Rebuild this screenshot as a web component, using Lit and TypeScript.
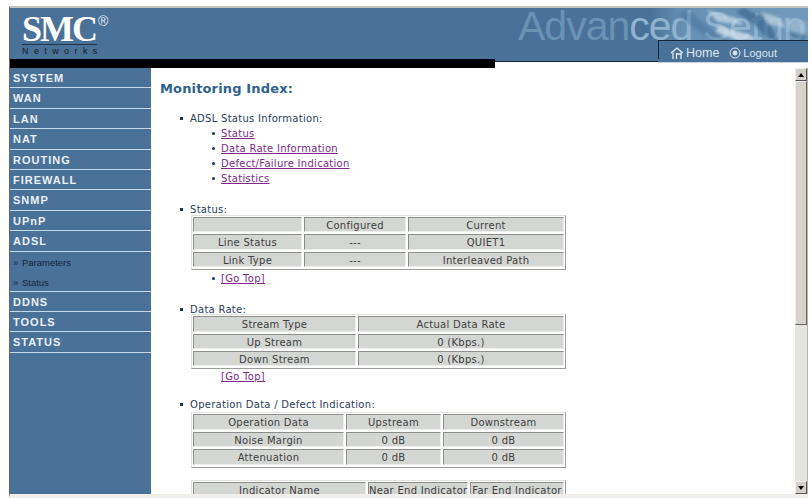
import { LitElement, html, css, svg } from "lit";
import { customElement } from "lit/decorators.js";

const tables = {
  status: { cols: "109px 102px 1fr", rows: [["", "Configured", "Current"], ["Line Status", "---", "QUIET1"], ["Link Type", "---", "Interleaved Path"]] },
  rate: { cols: "163px 1fr", rows: [["Stream Type", "Actual Data Rate"], ["Up Stream", "0 (Kbps.)"], ["Down Stream", "0 (Kbps.)"]] },
  op: { cols: "151px 95px 1fr", rows: [["Operation Data", "Upstream", "Downstream"], ["Noise Margin", "0 dB", "0 dB"], ["Attenuation", "0 dB", "0 dB"]] },
  ind: { cols: "173px 100px 1fr", rows: [["Indicator Name", "Near End Indicator", "Far End Indicator"]] },
};

@customElement("app-root")
export class AppRoot extends LitElement {
  static styles = css`
    :host { display: block; width: 812px; height: 498px; overflow: hidden; background: #fff; font-family: "DejaVu Sans", sans-serif; }
    .frame { display: flex; flex-direction: column; height: 492px; margin: 6px 4px 0 9px; border-top: 2px solid #c4c2bc; border-left: 1px solid #666; border-bottom: 4px solid #f0efeb; box-sizing: border-box; }
    .head { position: relative; height: 51px; flex: none; background: #4a7198; overflow: hidden; }
    .logo { position: absolute; left: 12px; top: 6px; width: 95px; color: #fff; }
    .smc { font: bold 36px/30px "Liberation Serif", serif; letter-spacing: -2px; display: block; }
    .reg { position: absolute; left: 76px; top: 0; font: 14px/14px "Liberation Sans", sans-serif; color: #e2eaf1; }
    .nw { display: block; border-top: 1px solid #20344a; font: 9px/12px "Liberation Sans", sans-serif; letter-spacing: 5.4px; color: #12202e; width: 75px; white-space: nowrap; }
    .photo { position: absolute; left: 130px; top: 0; width: 668px; height: 51px; }
    .adv { position: absolute; left: 508px; top: 4px; font: 41px/28px "Liberation Sans", sans-serif; letter-spacing: -1px; color: #6a92b3; white-space: nowrap; }
    .adv span { color: #8fb3cf; }
    .nav { position: absolute; left: 648px; top: 32px; right: 0; height: 24px; border-left: 1px solid #14263c; border-top: 1px solid #14263c; background: #4a7198; display: flex; gap: 10px; padding: 4px 0 0 11px; box-sizing: border-box; color: #dbe5ee; font: 12.5px/16px "Liberation Sans", sans-serif; }
    .nav span { display: inline-flex; align-items: center; gap: 2px; height: 16px; }
    .nav .lo { font-size: 11px; }
    .strip { position: relative; height: 9px; flex: none; background: #fff; }
    .strip .black { width: 485px; height: 9px; background: #000; }
    .strip .line { position: absolute; left: 485px; top: 0; width: 163px; height: 3px; background: linear-gradient(#4a7198 0 2px, #14263c 2px); }
    .strip .light { position: absolute; left: 648px; top: 0; right: 0; height: 4px; background: linear-gradient(#4a7198 0 3px, #c9d6e2 3px); }
    .body { display: flex; flex: 1; min-height: 0; }
    .side { width: 141px; flex: none; background: #4a7198; box-sizing: border-box; }
    .item { height: 20.4px; box-sizing: border-box; border-bottom: 1px solid #c6d9ea; padding-left: 3px; font: bold 11px/21px "Liberation Sans", sans-serif; letter-spacing: 1px; color: #e9f0f6; }
    .sub { height: 20px; padding-left: 3px; font: 9.5px/21px "Liberation Sans", sans-serif; color: #12263e; }
    .sub.last { border-bottom: 1px solid #c6d9ea; box-sizing: border-box; }
    .sub i { font-style: normal; margin-right: 1px; }
    .main { flex: 1; min-width: 0; display: flex; overflow: hidden; }
    .content { flex: 1; min-width: 0; overflow: hidden; padding: 13px 0 0 9px; font-size: 10px; line-height: 15px; letter-spacing: .28px; color: #2f3f4f; }
    h1 { margin: 0 0 15px; font: bold 13px/15px "DejaVu Sans", sans-serif; letter-spacing: .15px; color: #2e6290; }
    .l1 { display: flex; align-items: center; gap: 7px; margin-left: 20px; color: #2a4058; height: 14px; }
    .l1::before { content: ""; width: 3px; height: 3px; background: #1a3556; }
    .l2 { display: flex; align-items: center; gap: 6px; margin-left: 52px; height: 15px; }
    .l2::before { content: ""; width: 3px; height: 3px; border-radius: 50%; background: #1a3556; }
    a { color: #7d2a86; text-decoration: underline; }
    .l3 { margin-left: 61px; height: 15px; }
    .tbl { display: grid; gap: 2px; width: 375px; box-sizing: border-box; margin-left: 31px; padding: 1px 1px 2px; border: 1px solid; border-color: #e2e2de #9a9a96 #9a9a96 #e2e2de; background: #fff; }
    .tbl div { height: 15.4px; box-sizing: border-box; background: #d4d6d4; border: 1px solid; border-color: #8e8e8c #eee #eee #8e8e8c; text-align: center; line-height: 16px; color: #404040; white-space: nowrap; }
    .bar { width: 12px; flex: none; background: #e6e4df; display: flex; flex-direction: column; align-items: stretch; border-right: 1px solid #b8b6b0; }
    .btn { height: 13px; flex: none; background: #d4d0c8; border: 1px solid; border-color: #eee #555 #555 #eee; box-sizing: border-box; display: flex; align-items: center; justify-content: center; }
    .thumb { height: 244px; flex: none; background: #d6d3cb; border: 1px solid; border-color: #eee #666 #666 #eee; box-sizing: border-box; }
    .track { flex: 1; }
    .up { width: 0; height: 0; border: 3px solid transparent; border-top: 0; border-bottom: 4px solid #000; }
    .down { width: 0; height: 0; border: 3px solid transparent; border-bottom: 0; border-top: 4px solid #000; }
  `;

  tbl(t: { cols: string; rows: string[][] }, mt: number) {
    return html`<div class="tbl" style="grid-template-columns:${t.cols};margin-top:${mt}px">
      ${t.rows.flat().map((c) => html`<div>${c}</div>`)}
    </div>`;
  }

  render() {
    const menu1 = ["SYSTEM", "WAN", "LAN", "NAT", "ROUTING", "FIREWALL", "SNMP", "UPnP", "ADSL"];
    const menu2 = ["DDNS", "TOOLS", "STATUS"];
    return html`<div class="frame">
      <div class="head">
        <svg class="photo" viewBox="0 0 668 51" preserveAspectRatio="none">
          <defs>
            <linearGradient id="f" x1="0" x2="1"><stop offset="0" stop-color="#6690b3" stop-opacity="0"/><stop offset=".2" stop-color="#6690b3"/><stop offset="1" stop-color="#7199bb"/></linearGradient>
          </defs>
          <rect x="510" y="0" width="158" height="33" fill="url(#f)"/>
        </svg>
        <div class="logo"><span class="smc">SMC</span><span class="reg">®</span><span class="nw">Networks</span></div>
        <div class="adv">Advan<span>ced Setup</span></div>
        <svg class="photo" viewBox="0 0 668 51" preserveAspectRatio="none">
          <defs>
            <filter id="b"><feGaussianBlur stdDeviation="1.5"/></filter>
            <clipPath id="c"><rect x="510" y="0" width="158" height="32"/></clipPath>
          </defs>
          <g filter="url(#b)" clip-path="url(#c)">
            ${svg`<path d="M545 0l20 16 22 16H570L538 8z" fill="#3f6c96" opacity=".4"/>
            <path d="M566 2l30 8 8 7-26-3z" fill="#c4d9e8" opacity=".75"/>
            <path d="M578 18l30 8 10 6h-22l-20-8z" fill="#d2e2ee" opacity=".8"/>
            <path d="M604 0l24 12 10 20h-10l-16-18-16-10z" fill="#34618c" opacity=".65"/>
            <path d="M622 4l18 6 6 10-18-4z" fill="#c0d6e6" opacity=".7"/>
            <path d="M644 10l22 4v14l-16-6z" fill="#a6c3d9" opacity=".6"/>
            <path d="M648 24l18 2v6h-14z" fill="#34618c" opacity=".5"/>`}
          </g>
        </svg>
        <div class="nav">
          <span><svg width="14" height="12" viewBox="0 0 14 12" fill="none" stroke="#e4ecf3" stroke-width="1.3"><path d="M1 6 7 1 13 6"/><path d="M3 5.500v6.500M6.500 6v6M11 5.500v6.500M6.500 7H11"/></svg>Home</span>
          <span class="lo"><svg width="12" height="12" viewBox="0 0 12 12" fill="none" stroke="#dbe5ee"><circle cx="6" cy="6" r="5"/><circle cx="6" cy="6" r="2" fill="#dbe5ee"/></svg>Logout</span>
        </div>
      </div>
      <div class="strip"><div class="black"></div><div class="line"></div><div class="light"></div></div>
      <div class="body">
        <div class="side">
          ${menu1.map((m) => html`<div class="item">${m}</div>`)}
          <div class="sub"><i>»</i> Parameters</div>
          <div class="sub last"><i>»</i> Status</div>
          ${menu2.map((m) => html`<div class="item">${m}</div>`)}
        </div>
        <div class="main">
          <div class="content">
            <h1>Monitoring Index:</h1>
            <div class="l1" style="height:15px">ADSL Status Information:</div>
            <div class="l2"><a>Status</a></div>
            <div class="l2"><a>Data Rate Information</a></div>
            <div class="l2"><a>Defect/Failure Indication</a></div>
            <div class="l2"><a>Statistics</a></div>
            <div class="l1" style="margin-top:16px">Status:</div>
            ${this.tbl(tables.status, -1)}
            <div class="l2" style="margin-top:1px"><a>[Go Top]</a></div>
            <div class="l1" style="margin-top:16px">Data Rate:</div>
            ${this.tbl(tables.rate, -2)}
            <div class="l3"><a>[Go Top]</a></div>
            <div class="l1" style="margin-top:13px">Operation Data / Defect Indication:</div>
            ${this.tbl(tables.op, 1)}
            ${this.tbl(tables.ind, 12)}
          </div>
          <div class="bar">
            <div class="btn"><div class="up"></div></div>
            <div class="thumb"></div>
            <div class="track"></div>
            <div class="btn"><div class="down"></div></div>
          </div>
        </div>
      </div>
    </div>`;
  }
}
